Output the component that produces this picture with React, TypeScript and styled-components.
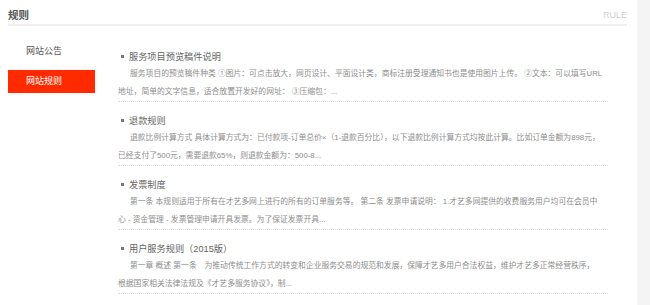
import { FC } from 'react';
import styled, { createGlobalStyle } from 'styled-components';

/** data */
type Rule = { title: string; lines: [string, string] };

const rules: Rule[] = [
  {
    title: '服务项目预览稿件说明',
    lines: [
      '服务项目的预览稿件种类 ①图片：可点击放大，网页设计、平面设计类，商标注册受理通知书也是使用图片上传。 ②文本：可以填写URL',
      '地址，简单的文字信息，适合放置开发好的网址： ③压缩包：...',
    ],
  },
  {
    title: '退款规则',
    lines: [
      '退款比例计算方式 具体计算方式为：已付款项-订单总价×（1-退款百分比），以下退款比例计算方式均按此计算。比如订单金额为898元，',
      '已经支付了500元，需要退款65%，则退款金额为：500-8...',
    ],
  },
  {
    title: '发票制度',
    lines: [
      '第一条 本规则适用于所有在才艺多网上进行的所有的订单服务等。 第二条 发票申请说明： 1.才艺多网提供的收费服务用户均可在会员中',
      '心 - 资金管理 - 发票管理申请开具发票。为了保证发票开具...',
    ],
  },
  {
    title: '用户服务规则（2015版）',
    lines: [
      '第一章 概述 第一条　为推动传统工作方式的转变和企业服务交易的规范和发展，保障才艺多用户合法权益，维护才艺多正常经营秩序，',
      '根据国家相关法律法规及《才艺多服务协议》，制...',
    ],
  },
];

const menu = ['网站公告', '网站规则'];

export const App: FC = () => {
  return (
    <SPage>
      <GlobalStyle />
      <SPanel>
        {/* 見出し */}
        <SHeader>
          <SHeading>规则</SHeading>
          <SSub>RULE</SSub>
        </SHeader>

        <SBody>
          {/* サイドメニュー */}
          <SMenu>
            {menu.map((m, i) => (
              <SMenuItem key={m} $active={i === 1}>
                {m}
              </SMenuItem>
            ))}
          </SMenu>

          {/* 規則一覧 */}
          <SList>
            {rules.map((r) => (
              <SItem key={r.title}>
                <STitle>{r.title}</STitle>
                <SText>
                  <SLine $first>{r.lines[0]}</SLine>
                  <SLine $first={false}>{r.lines[1]}</SLine>
                </SText>
              </SItem>
            ))}
          </SList>
        </SBody>
      </SPanel>
    </SPage>
  );
};

export default App;

/** style */
const GlobalStyle = createGlobalStyle`
  * {
    box-sizing: border-box;
  }

  body {
    margin: 0;
    background: #f4f4f4;
    font-family: 'Liberation Sans', 'Noto Sans CJK SC', sans-serif;
  }
`;

const SPage = styled.div`
  width: 650px;
  height: 305px;
  overflow: hidden;
`;

const SPanel = styled.div`
  width: 637px;
  height: 305px;
  background: #fff;
  padding: 0 10px 0 8px;
`;

const SHeader = styled.div`
  display: flex;
  justify-content: space-between;
  align-items: flex-end;
  height: 26px;
  padding-bottom: 2px;
  border-bottom: 2px solid #efefef;
`;

const SHeading = styled.h2`
  margin: 0;
  font-size: 10.5px;
  font-weight: bold;
  color: #555;
  line-height: 14px;
`;

const SSub = styled.span`
  font-size: 9px;
  color: #d0d0d0;
  line-height: 14px;
`;

const SBody = styled.div`
  display: flex;
  gap: 23px;
`;

const SMenu = styled.ul`
  list-style: none;
  margin: 0;
  padding: 14px 0 0;
  width: 87px;
  display: flex;
  flex-direction: column;
  gap: 7px;
`;

const SMenuItem = styled.li<{ $active: boolean }>`
  height: 23px;
  line-height: 23px;
  padding-left: 18px;
  font-size: 9px;
  color: ${({ $active }) => ($active ? '#fff' : '#555')};
  background: ${({ $active }) => ($active ? '#ff2a00' : 'transparent')};
  box-shadow: ${({ $active }) => ($active ? '0 0 3px rgba(0, 0, 0, 0.08)' : 'none')};
`;

const SList = styled.div`
  width: 490px;
  padding-top: 21px;
  display: flex;
  flex-direction: column;
  gap: 9px;
`;

const SItem = styled.div`
  border-bottom: 1px dotted #dcdcdc;
`;

const STitle = styled.h3`
  margin: 0;
  display: flex;
  align-items: center;
  gap: 5px;
  padding-left: 3px;
  height: 18px;
  font-size: 9.2px;
  font-weight: normal;
  color: #666;

  &::before {
    content: '';
    width: 3px;
    height: 3px;
    background: #777;
  }
`;

const SText = styled.p`
  margin: 0;
  font-size: 7.8px;
  line-height: 18px;
  color: #8e8e8e;
`;

const SLine = styled.span<{ $first: boolean }>`
  display: block;
  white-space: nowrap;
  overflow: hidden;
  padding-left: ${({ $first }) => ($first ? '12px' : '0')};
`;
